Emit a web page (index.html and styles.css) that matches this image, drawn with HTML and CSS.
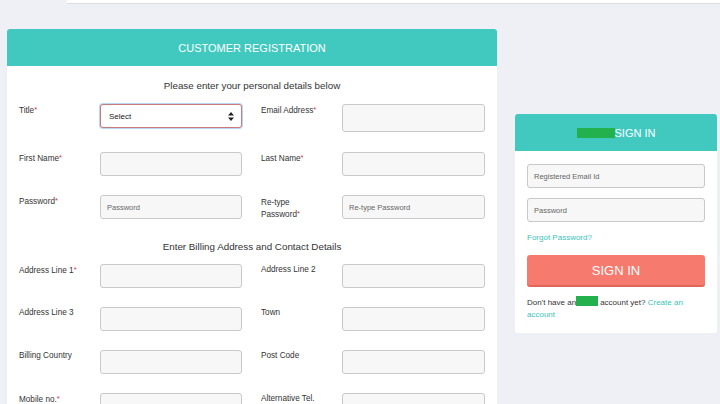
FILE: index.html
```html
<!DOCTYPE html>
<html>
<head>
<meta charset="utf-8">
<link rel="stylesheet" href="styles.css">
</head>
<body>
<div class="topstrip"></div>
<div class="page">
  <div class="card reg">
    <div class="card-head">CUSTOMER REGISTRATION</div>
    <div class="card-body">
      <div class="section-title">Please enter your personal details below</div>
      <div class="row first">
        <div class="field"><div class="label">Title<span class="req">*</span></div>
          <div class="select"><span>Select</span>
            <svg class="arrows" width="6" height="9" viewBox="0 0 6 9"><path d="M0 3.5 L3 0 L6 3.5 Z M0 5.5 L3 9 L6 5.5 Z" fill="#222"/></svg>
          </div>
        </div>
        <div class="field"><div class="label">Email Address<span class="req">*</span></div><div class="input tall"></div></div>
      </div>
      <div class="row">
        <div class="field"><div class="label">First Name<span class="req">*</span></div><div class="input"></div></div>
        <div class="field"><div class="label">Last Name<span class="req">*</span></div><div class="input"></div></div>
      </div>
      <div class="row">
        <div class="field"><div class="label">Password<span class="req">*</span></div><div class="input"><span class="ph">Password</span></div></div>
        <div class="field"><div class="label two">Re-type<br>Password<span class="req">*</span></div><div class="input"><span class="ph">Re-type Password</span></div></div>
      </div>
      <div class="section-title second">Enter Billing Address and Contact Details</div>
      <div class="row">
        <div class="field"><div class="label">Address Line 1<span class="req">*</span></div><div class="input"></div></div>
        <div class="field"><div class="label">Address Line 2</div><div class="input"></div></div>
      </div>
      <div class="row">
        <div class="field"><div class="label">Address Line 3</div><div class="input"></div></div>
        <div class="field"><div class="label">Town</div><div class="input"></div></div>
      </div>
      <div class="row">
        <div class="field"><div class="label">Billing Country</div><div class="input"></div></div>
        <div class="field"><div class="label">Post Code</div><div class="input"></div></div>
      </div>
      <div class="row">
        <div class="field"><div class="label">Mobile no.<span class="req">*</span></div><div class="input"></div></div>
        <div class="field"><div class="label">Alternative Tel.</div><div class="input"></div></div>
      </div>
    </div>
  </div>

  <div class="card signin">
    <div class="card-head"><span class="redact"></span>SIGN IN</div>
    <div class="signin-body">
      <div class="input wide"><span class="ph">Registered Email Id</span></div>
      <div class="input wide"><span class="ph">Password</span></div>
      <div class="forgot">Forgot Password?</div>
      <div class="btn">SIGN IN</div>
      <div class="noacc">Don't have an<span class="redact small"></span>account yet? <span class="link">Create an account</span></div>
    </div>
  </div>
</div>
</body>
</html>
```

FILE: styles.css
```css
* { box-sizing: border-box; }
html, body { margin: 0; padding: 0; }
body {
  background: #eff0f5;
  font-family: "Liberation Sans", Arial, sans-serif;
  color: #333;
  width: 720px;
  height: 404px;
  overflow: hidden;
}
.topstrip {
  margin-left: 67px;
  height: 4px;
  background: #fff;
  border-bottom: 1px solid #dcdde3;
}
.page {
  display: flex;
  align-items: flex-start;
  padding: 25px 0 0 7px;
  gap: 18px;
}
.card {
  background: #fff;
  border-radius: 3px;
  overflow: hidden;
}
.card-head {
  background: #42c9bf;
  color: #fff;
  height: 37px;
  display: flex;
  align-items: center;
  justify-content: center;
  font-size: 11px;
}
.reg { width: 490px; height: 400px; }
.card-body { padding: 0 12px; }
.section-title {
  text-align: center;
  font-size: 9.8px;
  color: #333;
  padding-top: 14px;
  height: 38px;
}
.section-title.second {
  padding-top: 2px;
  height: 25px;
}
.row {
  display: flex;
  gap: 19px;
  margin-bottom: 19px;
}
.row.first { margin-bottom: 20px; align-items: flex-start; }
.field {
  display: flex;
  align-items: flex-start;
}
.label {
  width: 81px;
  flex: none;
  font-size: 8.2px;
  line-height: 11px;
  padding-top: 0;
  color: #333;
}
.label.two { padding-top: 2px; }
.req { color: #e0303a; font-size: 7.5px; vertical-align: 1px; }
.input {
  width: 142px;
  height: 24px;
  background: #f7f7f7;
  border: 1px solid #c9c9cc;
  border-radius: 3px;
  display: flex;
  align-items: center;
  padding-left: 6px;
}
.field + .field .input { width: 143px; }
.input.tall { height: 28px; }
.ph { font-size: 7.5px; color: #666; }
.select {
  width: 142px;
  height: 24px;
  border: 1px solid #c97a7a;
  border-radius: 3px;
  box-shadow: 0 0 0 1px #b8d6f5;
  background: #fff;
  display: flex;
  align-items: center;
  justify-content: space-between;
  padding: 0 7px 0 8px;
  font-size: 8px;
  color: #222;
}
.signin { width: 202px; margin-top: 85px; }
.signin-body { padding: 13px 12px 12px 12px; }
.input.wide { width: 178px; margin-bottom: 10px; }
.forgot {
  color: #3cc3b9;
  font-size: 8px;
  line-height: 10px;
  padding-top: 1px;
  height: 23px;
}
.btn {
  background: #f77a6e;
  border-bottom: 2px solid #e0655a;
  border-radius: 3px;
  height: 32px;
  color: #fff;
  font-size: 13px;
  display: flex;
  align-items: center;
  justify-content: center;
  width: 178px;
}
.noacc {
  font-size: 8px;
  line-height: 12px;
  margin-top: 9px;
  color: #333;
}
.link { color: #3cc3b9; }
.redact {
  display: inline-block;
  width: 38px;
  height: 10px;
  background: #22b14c;
}
.redact.small {
  width: 22px;
  height: 10px;
  vertical-align: -1px;
  margin: 0 2px 0 0;
}
```
